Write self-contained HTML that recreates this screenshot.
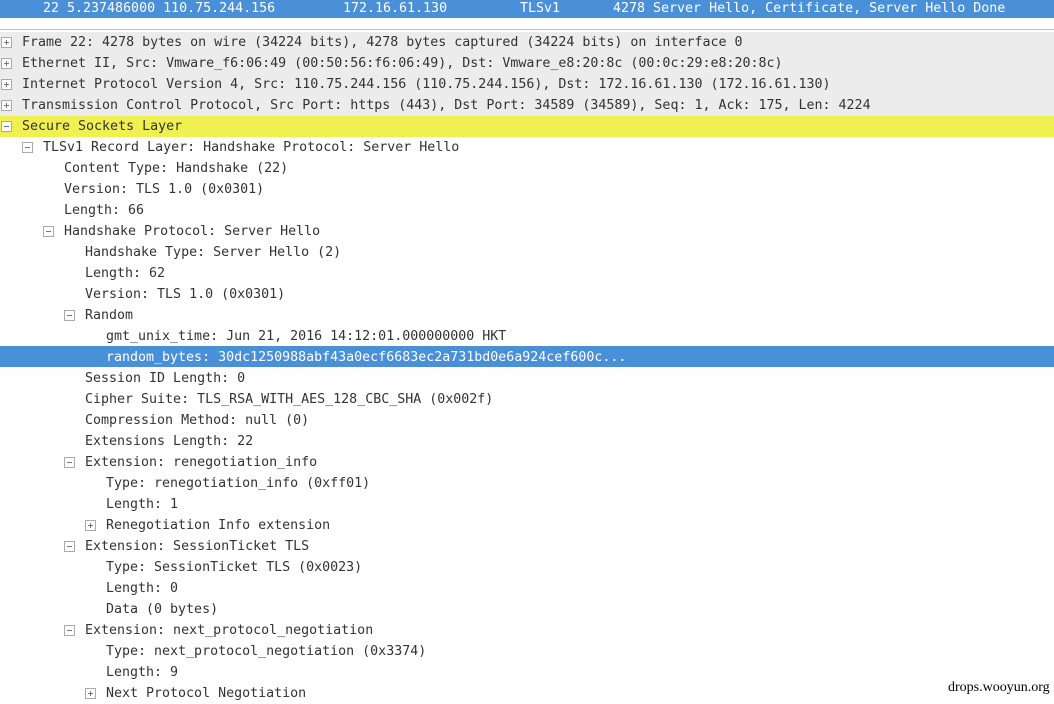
<!DOCTYPE html>
<html><head><style>
body{margin:0;width:1054px;height:702px;overflow:hidden;background:#fff;font-family:"DejaVu Sans Mono","Liberation Mono",monospace;font-size:13.3px;color:#333;position:relative}
.top{position:absolute;left:0;top:0;width:1054px;height:18px;background:#4a90d9;color:#fff;white-space:pre;line-height:18px}
.top span{position:absolute;top:0}
.sep{position:absolute;left:0;top:29px;width:1054px;height:1px;background:#bbb}
.r{position:absolute;left:0;width:1054px;height:21px;line-height:21px;white-space:pre}
.g{background:#ececec}.y{background:#f0f050}.s{background:#4a90d9;color:#fff}
.r b{font-weight:normal;position:absolute;top:0}
.x{position:absolute;top:5px;width:9px;height:9px;border:1px solid #aaa;background:#fff}
.x:before{content:"";position:absolute;left:2px;top:4px;width:5px;height:1px;background:#777}
.x.p:after{content:"";position:absolute;left:4px;top:2px;width:1px;height:5px;background:#777}
.wm{position:absolute;left:948px;top:680px;font-family:"Liberation Serif",serif;font-size:14px;color:#000}
</style></head><body>
<div class="top"><span style="left:43px">22 5.237486000 110.75.244.156</span><span style="left:343px">172.16.61.130</span><span style="left:520px">TLSv1</span><span style="left:613px">4278 Server Hello, Certificate, Server Hello Done</span></div>
<div class="sep"></div>
<div class="r g" style="top:32px"><i class="x p" style="left:1px"></i><b style="left:22px">Frame 22: 4278 bytes on wire (34224 bits), 4278 bytes captured (34224 bits) on interface 0</b></div>
<div class="r g" style="top:53px"><i class="x p" style="left:1px"></i><b style="left:22px">Ethernet II, Src: Vmware_f6:06:49 (00:50:56:f6:06:49), Dst: Vmware_e8:20:8c (00:0c:29:e8:20:8c)</b></div>
<div class="r g" style="top:74px"><i class="x p" style="left:1px"></i><b style="left:22px">Internet Protocol Version 4, Src: 110.75.244.156 (110.75.244.156), Dst: 172.16.61.130 (172.16.61.130)</b></div>
<div class="r g" style="top:95px"><i class="x p" style="left:1px"></i><b style="left:22px">Transmission Control Protocol, Src Port: https (443), Dst Port: 34589 (34589), Seq: 1, Ack: 175, Len: 4224</b></div>
<div class="r y" style="top:116px"><i class="x" style="left:1px"></i><b style="left:22px">Secure Sockets Layer</b></div>
<div class="r" style="top:137px"><i class="x" style="left:22px"></i><b style="left:43px">TLSv1 Record Layer: Handshake Protocol: Server Hello</b></div>
<div class="r" style="top:158px"><b style="left:64px">Content Type: Handshake (22)</b></div>
<div class="r" style="top:179px"><b style="left:64px">Version: TLS 1.0 (0x0301)</b></div>
<div class="r" style="top:200px"><b style="left:64px">Length: 66</b></div>
<div class="r" style="top:221px"><i class="x" style="left:43px"></i><b style="left:64px">Handshake Protocol: Server Hello</b></div>
<div class="r" style="top:242px"><b style="left:85px">Handshake Type: Server Hello (2)</b></div>
<div class="r" style="top:263px"><b style="left:85px">Length: 62</b></div>
<div class="r" style="top:284px"><b style="left:85px">Version: TLS 1.0 (0x0301)</b></div>
<div class="r" style="top:305px"><i class="x" style="left:64px"></i><b style="left:85px">Random</b></div>
<div class="r" style="top:326px"><b style="left:106px">gmt_unix_time: Jun 21, 2016 14:12:01.000000000 HKT</b></div>
<div class="r s" style="top:346px"><b style="left:106px;top:1px">random_bytes: 30dc1250988abf43a0ecf6683ec2a731bd0e6a924cef600c...</b></div>
<div class="r" style="top:368px"><b style="left:85px">Session ID Length: 0</b></div>
<div class="r" style="top:389px"><b style="left:85px">Cipher Suite: TLS_RSA_WITH_AES_128_CBC_SHA (0x002f)</b></div>
<div class="r" style="top:410px"><b style="left:85px">Compression Method: null (0)</b></div>
<div class="r" style="top:431px"><b style="left:85px">Extensions Length: 22</b></div>
<div class="r" style="top:452px"><i class="x" style="left:64px"></i><b style="left:85px">Extension: renegotiation_info</b></div>
<div class="r" style="top:473px"><b style="left:106px">Type: renegotiation_info (0xff01)</b></div>
<div class="r" style="top:494px"><b style="left:106px">Length: 1</b></div>
<div class="r" style="top:515px"><i class="x p" style="left:85px"></i><b style="left:106px">Renegotiation Info extension</b></div>
<div class="r" style="top:536px"><i class="x" style="left:64px"></i><b style="left:85px">Extension: SessionTicket TLS</b></div>
<div class="r" style="top:557px"><b style="left:106px">Type: SessionTicket TLS (0x0023)</b></div>
<div class="r" style="top:578px"><b style="left:106px">Length: 0</b></div>
<div class="r" style="top:599px"><b style="left:106px">Data (0 bytes)</b></div>
<div class="r" style="top:620px"><i class="x" style="left:64px"></i><b style="left:85px">Extension: next_protocol_negotiation</b></div>
<div class="r" style="top:641px"><b style="left:106px">Type: next_protocol_negotiation (0x3374)</b></div>
<div class="r" style="top:662px"><b style="left:106px">Length: 9</b></div>
<div class="r" style="top:683px"><i class="x p" style="left:85px"></i><b style="left:106px">Next Protocol Negotiation</b></div>
<div class="wm">drops.wooyun.org</div>
</body></html>
